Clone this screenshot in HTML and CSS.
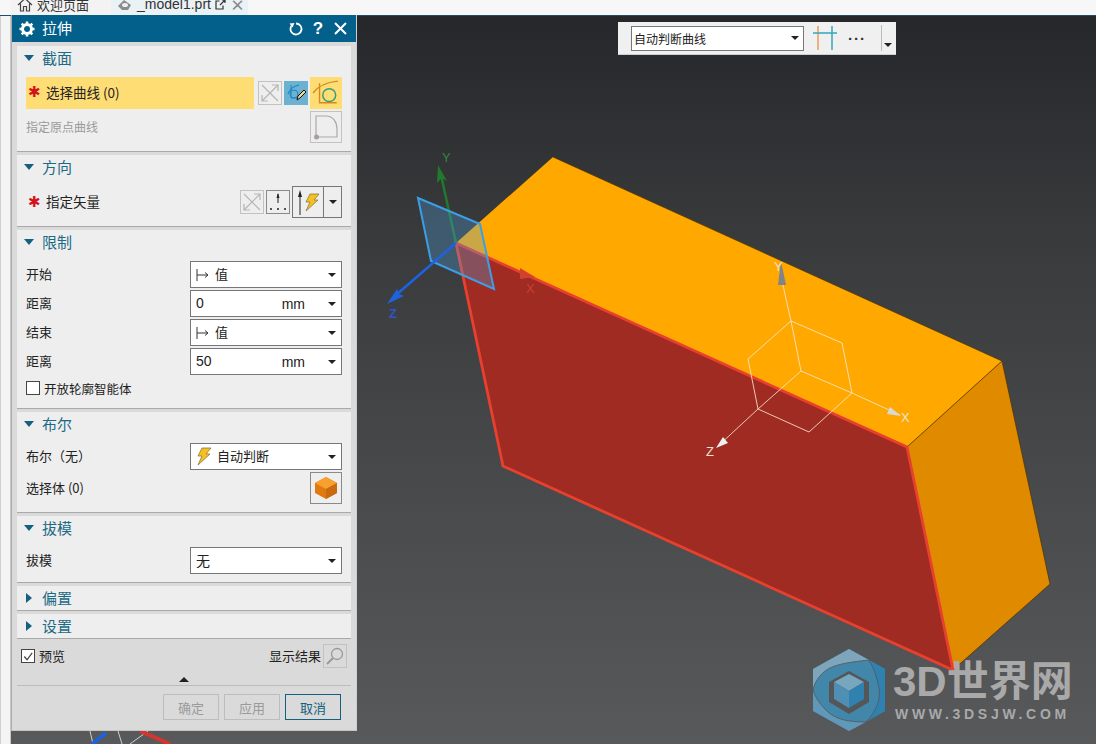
FILE: index.html
```html
<!DOCTYPE html>
<html lang="zh-CN">
<head>
<meta charset="utf-8">
<title>拉伸</title>
<link rel="stylesheet" href="styles.css">
</head>
<body>
<div class="app">
  <div class="topbar">
    <div class="tab tab-home">
      <svg class="tab-icon" width="16" height="15" viewBox="0 0 16 15"><path d="M1 8 8 1.500 15 8M3.500 6.500V14H6.500V9.500H9.500V14H12.500V6.500" fill="none" stroke="#444" stroke-width="1.200"/></svg>
      <span>欢迎页面</span>
    </div>
    <div class="tab tab-active">
      <svg class="tab-icon" width="16" height="13" viewBox="0 0 16 13"><path d="M1 8 7 2 14 7 11 12H5Z" fill="#8b8b8b"/><ellipse cx="8" cy="7" rx="3" ry="2" fill="#eee"/></svg>
      <span class="tab-file">_model1.prt</span>
      <svg width="11" height="11" viewBox="0 0 11 11"><path d="M8 6.500V10H1V2H4.500M5 6 10 1M7 1H10V4" fill="none" stroke="#333" stroke-width="1.200"/></svg>
      <span class="tab-close">×</span>
    </div>
  </div>
  <div class="workspace">
    <div class="strip"></div>
    <div class="viewport">
      <svg class="scene" viewBox="11 16 1085 728" width="1085" height="728">
        <polygon points="553,157 1002,361 907,447 456,243" fill="#ffa800"/>
        <polygon points="907,447 1002,361 1050,584 953,670" fill="#e08a00"/>
        <polygon points="456,243 907,447 953,670 503,466" fill="#a02b22"/>
        <path d="M553 157 1002 361 1050 584 953 670M907 447 1002 361" fill="none" stroke="#4d3200" stroke-width=".7"/>
        <path d="M456 243 907 447 953 670 503 466Z" fill="none" stroke="#e8402e" stroke-width="2.800"/>
        <!-- datum csys on the left corner -->
        <path d="M456 243 441 175" stroke="#1f7a2c" stroke-width="2.500"/>
        <polygon points="438,165 447,181 442,178 437,183" fill="#1f7a2c"/>
        <polygon points="418,198 480,224 494,289 431,261" fill="#4ea6e8" fill-opacity=".3" stroke="#3c9fe6" stroke-width="2"/>
        <path d="M456 243 396 295" stroke="#1d63e0" stroke-width="2.500"/>
        <polygon points="387,304 397,289 399,294 404,296" fill="#1d63e0"/>
        <polygon points="520,268 535,277 520,279" fill="#d2402f"/>
        <text class="axis-label" x="442" y="162" fill="#2f8a3c">Y</text>
        <text class="axis-label strong" x="389" y="318" fill="#2d55c8">Z</text>
        <text class="axis-label" x="526" y="293" fill="#c9402f">X</text>
        <!-- WCS triad -->
        <g fill="none" stroke="#f3e6cf" stroke-width="1" stroke-opacity=".85">
          <path d="M791 321 842 343 852 393 809 432 758 409 748 359Z"/>
          <path d="M791 321 801 371M852 393 801 371M758 409 801 371"/>
          <path d="M791 321 780 272M852 393 900 415M758 409 717 447"/>
        </g>
        <polygon points="781,261 786,285 778,285" fill="#7f8488"/>
        <polygon points="901,416 887,414 890,407" fill="#d8d8d8"/>
        <polygon points="716,448 723,437 728,443" fill="#f2f2f2"/>
        <text class="axis-label light" x="774" y="271">Y</text>
        <text class="axis-label light" x="901" y="422">X</text>
        <text class="axis-label light" x="706" y="456">Z</text>
        <!-- axes peeking out under the dialog -->
        <path d="M90 731 93 744M118 731 122 744M148 731 130 744" stroke="#cfcfcf" fill="none"/>
        <path d="M106 733 92 744" stroke="#1d63e0" stroke-width="3.500"/>
        <path d="M140 731 170 744" stroke="#d6352f" stroke-width="4"/>
        <!-- watermark logo -->
        <polygon points="849,649 885,669 885,711 849,731 813,711 813,669" fill="#4286aa"/>
        <path d="M849 649 813 669V690C815 680 822 672 830 668 838 664 850 662 869 660Z" fill="#7da6bd"/>
        <path d="M813 690V711L849 731 866 722C850 722 835 720 826 710 820 704 815 697 813 690Z" fill="#5f98b8"/>
        <path d="M885 669V711L866 722C876 712 881 700 879 688 877 678 874 668 869 660Z" fill="#2f82b0"/>
        <path d="M813 690C815 680 822 672 830 668 838 664 850 662 869 660M813 690C815 697 820 704 826 710 835 720 850 722 866 722M869 660C874 668 877 678 879 688 881 700 876 712 866 722" fill="none" stroke="#555658" stroke-width=".8"/>
        <polygon points="849,671 869,682 869,702 849,714 829,702 829,682" fill="#555658"/>
        <polygon points="849,674 864,682 849,691 834,682" fill="#79a6bf"/>
        <polygon points="834,682 849,691 849,708 834,699" fill="#4e8fb3"/>
        <polygon points="864,682 849,691 849,708 864,699" fill="#2f82b0"/>
      </svg>

      <div class="watermark">
        <div class="wm-title">3D世界网</div>
        <div class="wm-url">WWW.3DSJW.COM</div>
      </div>

      <div class="toolbar">
        <div class="tb-select"><span>自动判断曲线</span><i class="caret"></i></div>
        <svg class="tb-icon" width="26" height="28" viewBox="0 0 26 28"><path d="M5 2V26" stroke="#e0a060" stroke-width="1.500"/><path d="M19 2V26" stroke="#35a8b8" stroke-width="1.500"/><path d="M0 9H24" stroke="#35a8b8" stroke-width="1.500"/></svg>
        <div class="tb-dots">···</div>
        <div class="tb-sep"></div>
        <i class="caret tb-caret"></i>
      </div>

      <div class="dialog">
        <div class="dlg-head">
          <svg width="16" height="16" viewBox="0 0 16 16"><circle cx="8" cy="8" r="4.500" fill="none" stroke="#fff" stroke-width="3"/><path d="M8 0.500V3M8 13V15.500M0.500 8H3M13 8H15.500M2.700 2.700 4.500 4.500M11.500 11.500 13.300 13.300M2.700 13.300 4.500 11.500M11.500 4.500 13.300 2.700" stroke="#fff" stroke-width="2.500"/></svg>
          <span class="dlg-title">拉伸</span>
          <svg class="dlg-reset" width="14" height="14" viewBox="0 0 14 14"><path d="M7 1.500A5.500 5.500 0 1 1 2.400 4" fill="none" stroke="#fff" stroke-width="1.800"/><path d="M0.500 1.500 5.500 1 3.500 5.500Z" fill="#fff"/></svg>
          <span class="dlg-help">?</span>
          <svg width="13" height="13" viewBox="0 0 13 13"><path d="M1 1 12 12M12 1 1 12" stroke="#fff" stroke-width="2"/></svg>
        </div>

        <div class="groups">
          <section class="group g1">
            <h3 class="g-title"><i class="tri-down"></i>截面</h3>
            <div class="sel-row">
              <div class="sel-bar"><span class="req">✱</span><span>选择曲线 (0)</span></div>
              <span class="icon-btn ib-24 dim"><svg width="22" height="22" viewBox="0 0 22 22"><use href="#rev"/></svg></span>
              <span class="icon-btn ib-24 blue"><svg width="22" height="22" viewBox="0 0 22 22"><path d="M3 12C5 6 9 4 14 3" fill="none" stroke="#1c86c4" stroke-width="1.200"/><circle cx="9" cy="12" r="4" fill="none" stroke="#1c86c4"/><path d="M6 3V16H14" fill="none" stroke="#1c86c4"/><path d="M12 18 13 14 19 8 21 10 15 16Z" fill="#f0d890" stroke="#111"/></svg></span>
              <span class="icon-btn ib-32 hot"><svg width="28" height="28" viewBox="0 0 26 26"><path d="M1 13C6 6 14 3 24 2" fill="none" stroke="#d58a20" stroke-width="1.300"/><path d="M7 4V22H23" fill="none" stroke="#d58a20" stroke-width="1.300"/><circle cx="16" cy="15" r="6" fill="none" stroke="#3a9d78" stroke-width="1.400"/></svg></span>
            </div>
            <div class="row-origin">
              <span class="muted">指定原点曲线</span>
              <span class="icon-btn ib-32 dim"><svg width="26" height="26" viewBox="0 0 26 26"><path d="M3 23V2H13C20 2 24 8 24 15V23H3" fill="none" stroke="#aaa" stroke-width="1.200"/><circle cx="3.500" cy="23" r="2.500" fill="#a9a09c"/></svg></span>
            </div>
          </section>

          <section class="group g2">
            <h3 class="g-title"><i class="tri-down"></i>方向</h3>
            <div class="vec-row">
              <span class="req">✱</span>
              <span class="vec-label">指定矢量</span>
              <span class="icon-btn ib-24 dim"><svg width="22" height="22" viewBox="0 0 22 22"><use href="#rev"/></svg></span>
              <span class="icon-btn ib-24 plain"><svg width="22" height="22" viewBox="0 0 22 22"><path d="M11 3V12" stroke="#222"/><path d="M11 2 12.500 7H9.500Z" fill="#222"/><path d="M3 18H5M10 18H12M17 18H19" stroke="#222" stroke-width="1.600"/></svg></span>
              <span class="split">
                <span class="split-main"><svg width="28" height="28" viewBox="0 0 28 28"><path d="M6 8V27" stroke="#222"/><path d="M6 2 8 9H4Z" fill="#222"/><use href="#bolt" x="10" y="5"/></svg></span>
                <span class="split-arrow"><i class="caret"></i></span>
              </span>
            </div>
          </section>

          <section class="group g3">
            <h3 class="g-title"><i class="tri-down"></i>限制</h3>
            <div class="form-row"><span>开始</span><div class="combo"><svg width="14" height="14" viewBox="0 0 14 14"><path d="M1 1V13M1 7H12M9 4.500 12 7 9 9.500" fill="none" stroke="#333"/></svg><span class="combo-text">值</span><i class="caret"></i></div></div>
            <div class="form-row"><span>距离</span><div class="combo"><span class="combo-val">0</span><span class="unit">mm</span><i class="caret"></i></div></div>
            <div class="form-row"><span>结束</span><div class="combo"><svg width="14" height="14" viewBox="0 0 14 14"><path d="M1 1V13M1 7H12M9 4.500 12 7 9 9.500" fill="none" stroke="#333"/></svg><span class="combo-text">值</span><i class="caret"></i></div></div>
            <div class="form-row"><span>距离</span><div class="combo"><span class="combo-val">50</span><span class="unit">mm</span><i class="caret"></i></div></div>
            <label class="check-row"><i class="box"></i><span>开放轮廓智能体</span></label>
          </section>

          <section class="group g4">
            <h3 class="g-title"><i class="tri-down"></i>布尔</h3>
            <div class="form-row"><span>布尔（无）</span><div class="combo"><svg width="16" height="20" viewBox="0 0 16 20"><use href="#bolt" x="0" y="0"/></svg><span class="combo-text">自动判断</span><i class="caret"></i></div></div>
            <div class="body-row">
              <span>选择体 (0)</span>
              <span class="icon-btn ib-32 plain"><svg width="24" height="24" viewBox="0 0 24 24"><path d="M12 1 23 7V17L12 23 1 17V7Z" fill="#e07a10"/><path d="M12 1 23 7 12 13 1 7Z" fill="#f7a030"/><path d="M12 13 23 7V17L12 23Z" fill="#c86a10"/></svg></span>
            </div>
          </section>

          <section class="group g5">
            <h3 class="g-title"><i class="tri-down"></i>拔模</h3>
            <div class="form-row"><span>拔模</span><div class="combo"><span class="combo-val">无</span><i class="caret"></i></div></div>
          </section>

          <section class="group g6"><h3 class="g-title"><i class="tri-right"></i>偏置</h3></section>
          <section class="group g6"><h3 class="g-title"><i class="tri-right"></i>设置</h3></section>
        </div>

        <div class="dlg-foot">
          <div class="preview-row">
            <label class="preview"><i class="box checked"><svg width="13" height="13" viewBox="0 0 13 13"><path d="M2.500 6.500 5.500 10 11 2.500" fill="none" stroke="#444" stroke-width="1.300"/></svg></i><span>预览</span></label>
            <span class="show-result">显示结果</span>
            <span class="icon-btn ib-24 dim"><svg width="20" height="20" viewBox="0 0 20 20"><circle cx="12" cy="8" r="5.500" fill="none" stroke="#999" stroke-width="1.300"/><path d="M8 12 2 18" stroke="#999" stroke-width="2"/></svg></span>
          </div>
          <div class="collapse"><i class="tri-up"></i></div>
          <div class="btn-row">
            <button class="btn disabled">确定</button>
            <button class="btn disabled">应用</button>
            <button class="btn primary">取消</button>
          </div>
        </div>
      </div>
    </div>
  </div>
</div>
<svg class="defs" width="0" height="0">
  <defs>
    <g id="rev"><path d="M3 19 19 3M3 3 19 19" stroke="#b5b5b5" stroke-width="1.200"/><path d="M13 3H19V9M3 13V19H9" fill="none" stroke="#b5b5b5" stroke-width="1.200"/></g>
    <g id="bolt"><path d="M6 1H15L10 7H14L2 18 6 9H2Z" fill="#f5c020" stroke="#8a7a40" stroke-width=".8"/></g>
  </defs>
</svg>
</body>
</html>
```
FILE: styles.css
```css
* { box-sizing: border-box; }
html, body { margin: 0; padding: 0; }
body {
  width: 1096px;
  height: 744px;
  overflow: hidden;
  font-family: "Noto Sans CJK SC", "Noto Sans", sans-serif;
  font-size: 13px;
  color: #222;
  background: #f2f2f2;
}
.app { display: flex; flex-direction: column; width: 1096px; height: 744px; }
.defs { position: absolute; }

/* tabs */
.topbar {
  display: flex;
  height: 16px;
  flex: none;
  padding-left: 11px;
  background: #f7f7f7;
  border-bottom: 1px solid #1f4e63;
  overflow: hidden;
}
.tab {
  display: flex;
  align-items: center;
  font-family: "Noto Sans CJK SC", sans-serif;
  font-size: 13px;
  line-height: 15px;
  color: #333;
}
.tab-home { width: 100px; height: 21px; margin-top: -6px; padding-left: 6px; gap: 4px; background: #f3f3f3; }
.tab-active { width: 137px; height: 21px; margin-top: -6px; padding-left: 6px; gap: 4px; background: #eaf2f5; }
.tab-file { font-family: "Liberation Sans", sans-serif; font-size: 14px; }
.tab-close { color: #8a8a8a; font-size: 15px; font-weight: bold; margin-left: 0; }

.workspace { display: flex; flex: 1; min-height: 0; }
.strip { width: 11px; flex: none; background: #f4f4f4; border-left: 1px solid #cfcfcf; border-right: 1px solid #c8c8c8; }
.viewport {
  position: relative;
  flex: 1;
  background: linear-gradient(180deg, #25272a 0%, #3a3b3d 32%, #58595b 100%);
}
.scene { position: absolute; left: 0; top: 0; display: block; }
.axis-label { font-family: "Liberation Sans", sans-serif; font-size: 13px; }
.axis-label.strong { font-weight: bold; }
.axis-label.light { fill: #eee3d0; }

/* watermark */
.watermark { position: absolute; left: 882px; top: 642px; width: 190px; color: #a9a9aa; }
.wm-title { font-family: "Liberation Sans", "Noto Sans CJK SC", sans-serif; font-weight: bold; font-size: 42px; line-height: 48px; white-space: nowrap; }
.wm-url { font-family: "Liberation Sans", sans-serif; font-weight: bold; font-size: 14px; line-height: 16px; letter-spacing: 3.700px; white-space: nowrap; margin-left: 2px; margin-top: 0; }

/* floating toolbar */
.toolbar {
  position: absolute;
  left: 607px;
  top: 6px;
  width: 278px;
  height: 33px;
  display: flex;
  align-items: center;
  padding-left: 13px;
  background: #f0f0f0;
  border-bottom: 1px solid #cfcfcf;
}
.tb-select {
  display: flex;
  align-items: center;
  justify-content: space-between;
  flex: none;
  width: 173px;
  height: 25px;
  padding: 0 4px 0 2px;
  margin-right: 9px;
  background: #fff;
  border: 1px solid #777;
  font-size: 12px;
}
.tb-icon { flex: none; }
.tb-dots { width: 36px; flex: none; text-align: center; font-family: "Liberation Sans", sans-serif; font-size: 15px; font-weight: bold; color: #333; letter-spacing: 1px; }
.tb-sep { width: 1px; height: 26px; flex: none; margin-left: 6px; background: #bbb; }
.tb-caret { margin: 14px 0 0 2px; }

.caret { display: block; width: 0; height: 0; flex: none; border-left: 4px solid transparent; border-right: 4px solid transparent; border-top: 4px solid #222; }

/* dialog */
.dialog {
  position: absolute;
  left: 0;
  top: -1px;
  width: 346px;
  height: 716px;
  display: flex;
  flex-direction: column;
  background: #dadada;
  border-left: 1px solid #aaa;
  border-right: 1px solid #cfcfcf;
  border-bottom: 1px solid #c4c4c4;
}
.dlg-head {
  display: flex;
  align-items: center;
  height: 27px;
  flex: none;
  padding: 0 9px 0 7px;
  background: #03608b;
  color: #fff;
}
.dlg-title { font-size: 15px; margin-left: 7px; flex: 1; padding-bottom: 2px; }
.dlg-reset { margin-right: 8px; }
.dlg-help { width: 14px; margin-right: 9px; font-family: "Liberation Sans", sans-serif; font-size: 17px; font-weight: bold; text-align: center; }

.groups { display: flex; flex-direction: column; gap: 3px; padding: 4px 5px 0; flex: none; }
.group { background: #eeeeee; border-bottom: 1px solid #a9a9a9; padding: 0 9px; }
.g-title {
  display: flex;
  align-items: center;
  height: 24px;
  margin: 0;
  padding-bottom: 1px;
  font-size: 15px;
  font-weight: normal;
  color: #1c6a85;
}
.tri-down { width: 0; height: 0; margin: 0 8px 0 -2px; border-left: 5px solid transparent; border-right: 5px solid transparent; border-top: 6px solid #14617f; }
.tri-right { width: 0; height: 0; margin: 0 10px 0 0; border-top: 5px solid transparent; border-bottom: 5px solid transparent; border-left: 6px solid #14617f; }
.tri-up { display: block; width: 0; height: 0; border-left: 5px solid transparent; border-right: 5px solid transparent; border-bottom: 5px solid #222; }

.g1 { height: 106px; }
.g2 { height: 72px; }
.g3 { height: 179px; }
.g4 { height: 101px; }
.g5 { height: 67px; }
.g6 { height: 25px; }

.icon-btn { display: flex; align-items: center; justify-content: center; flex: none; border: 1px solid transparent; }
.ib-24 { width: 24px; height: 24px; }
.ib-32 { width: 32px; height: 32px; }
.icon-btn.dim { border-color: #c2c2c2; }
.icon-btn.plain { border-color: #8a8a8a; }
.icon-btn.blue { background: #6cb1cf; }
.icon-btn.hot { background: #ffdd75; }

.sel-row { display: flex; align-items: center; margin-top: 7px; height: 32px; }
.sel-bar { display: flex; align-items: center; width: 228px; height: 32px; margin-right: 4px; padding: 0 0 2px 2px; background: #ffdd75; font-size: 13.500px; }
.sel-row .ib-24 { margin-right: 2px; }
.req { width: 18px; flex: none; color: #d3121a; font-family: "DejaVu Sans", sans-serif; font-size: 15px; line-height: 16px; }
.row-origin { display: flex; align-items: center; justify-content: space-between; margin-top: 2px; }
.muted { color: #9a9a9a; font-size: 12px; padding-bottom: 2px; }

.vec-row { display: flex; align-items: center; height: 32px; margin-top: 7px; padding-left: 2px; font-size: 13.500px; }
.vec-label { flex: 1; padding-bottom: 2px; }
.vec-row .ib-24 { margin-right: 2px; }
.split { display: flex; height: 32px; width: 50px; border: 1px solid #777; flex: none; }
.split-main { display: flex; align-items: center; justify-content: center; width: 31px; border-right: 1px solid #777; }
.split-arrow { display: flex; align-items: center; justify-content: center; flex: 1; }

.form-row { display: flex; align-items: center; justify-content: space-between; height: 29px; font-size: 13px; }
.form-row > span { padding-bottom: 2px; }
.g3 .g-title + .form-row { margin-top: 6px; }
.g4 .g-title + .form-row { margin-top: 6px; }
.g5 .g-title + .form-row { margin-top: 6px; }
.combo {
  display: flex;
  align-items: center;
  width: 152px;
  height: 27px;
  padding: 0 5px 0 5px;
  background: #fff;
  border: 1px solid #777;
  gap: 5px;
}
.combo .caret { margin-left: auto; }
.combo-text { margin: 0 0 2px 0; }
.combo-val { margin-bottom: 2px; font-family: "Liberation Sans", "Noto Sans CJK SC", sans-serif; font-size: 14px; }
.unit { margin-left: auto; margin-right: 18px; font-family: "Liberation Sans", sans-serif; font-size: 14px; }
.unit + .caret { margin-left: 0; }
.check-row { display: flex; align-items: center; gap: 4px; height: 24px; font-size: 12.500px; }
.box { display: flex; align-items: center; justify-content: center; width: 14px; height: 14px; flex: none; background: #fff; border: 1px solid #444; }
.body-row { display: flex; align-items: center; justify-content: space-between; height: 32px; margin-top: 1px; }
.body-row > span:first-child { padding-bottom: 2px; }

.dlg-foot { flex: 1; padding: 5px 9px 0 9px; }
.preview-row { display: flex; align-items: center; height: 24px; }
.preview { display: flex; align-items: center; gap: 4px; flex: 1; }
.preview span { padding-bottom: 2px; }
.show-result { margin-right: 2px; padding-bottom: 2px; }
.collapse { display: flex; justify-content: center; align-items: center; width: 334px; height: 18px; margin: 0 0 0 -4px; padding: 8px 0 3px; border-bottom: 1px solid #bcbcbc; }
.btn-row { display: flex; justify-content: flex-end; gap: 5px; margin: 8px 6px 0 0; }
.btn {
  width: 56px;
  height: 26px;
  padding: 0;
  font: 13px "Noto Sans CJK SC", sans-serif;
  background: transparent;
  border: 1px solid #bdbdbd;
  color: #9a9a9a;
}
.btn.primary { border-color: #14607f; color: #14607f; }
```
